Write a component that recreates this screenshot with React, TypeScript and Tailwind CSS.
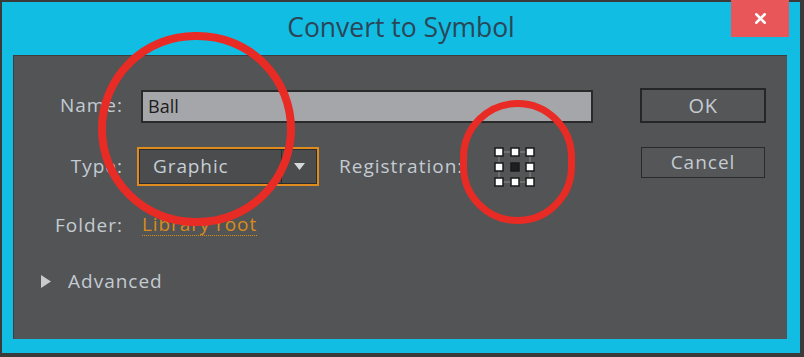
import { X } from 'lucide-react'

const labelCls = 'w-[109px] shrink-0 text-right text-[19px] text-[#c3cbd3] tracking-[1px]'

function RegistrationGrid() {
  const pts = [499, 515, 530]
  const rows = [151, 166, 181]
  return (
    <svg width="44" height="44" viewBox="493 144 44 44" className="shrink-0">
      <rect x={499} y={151} width={31} height={30} fill="none" stroke="#8d8d8d" strokeWidth={1} />
      {rows.map((cy, r) =>
        pts.map((cx, c) => {
          const center = r === 1 && c === 1
          return (
            <rect
              key={`${r}-${c}`}
              x={cx - 4}
              y={cy - 4}
              width={8}
              height={8}
              fill={center ? '#1f1f1f' : '#ffffff'}
              stroke="#1a1a1a"
              strokeWidth={1.5}
            />
          )
        })
      )}
    </svg>
  )
}

export default function App() {
  return (
    <div
      className="relative w-[804px] h-[357px] overflow-hidden bg-[#3a3a3a] pt-[2px] pl-[2px] pr-[4px] pb-[4px]"
      style={{ fontFamily: '"Open Sans", "Noto Sans", sans-serif' }}
    >
      <div className="flex h-full flex-col bg-[#12bde4]">
        {/* Title bar */}
        <div className="grid h-[53px] shrink-0 grid-cols-[1fr_auto_1fr]">
          <div />
          <div className="pt-[6px] text-[26.5px] text-[#2b4657]">Convert to Symbol</div>
          <div className="flex justify-end pr-[11px]">
            <div className="-mt-[2px] flex h-[37px] w-[58px] items-center justify-center bg-[#e8565a]">
              <X className="h-[17px] w-[17px] text-white" strokeWidth={3.5} />
            </div>
          </div>
        </div>

        {/* Body */}
        <div className="ml-[11px] mr-[13px] mb-[14px] flex flex-1 border-l border-t border-[#3e3e3e] bg-[#535455]">
          <div className="flex flex-1 flex-col pt-[32px]">
            <div className="flex h-[35px] items-center">
              <span className={labelCls}>Name:</span>
              <div className="ml-[18px] mt-[2px] flex h-[33px] w-[452px] items-center border-2 border-[#2a2a2a] bg-[#a5a6a9] pl-[5px] text-[18px] text-[#1c1c1c]">
                Ball
              </div>
            </div>

            <div className="mt-[24px] flex h-[39px] items-center">
              <span className={labelCls}>Type:</span>
              <div className="ml-[14px] flex h-[39px] w-[182px] border-2 border-[#df8b1e]">
                <div className="flex flex-1 items-center border border-[#2c2c2c] bg-[#4b4c4d]">
                  <span className="flex-1 pl-[13px] text-[19px] text-[#c6cfd6] tracking-[0.9px]">Graphic</span>
                  <div className="h-full w-px bg-[#2c2c2c]" />
                  <div className="flex w-[34px] items-center justify-center">
                    <svg width="11" height="7" viewBox="0 0 11 7">
                      <path d="M0 0 H11 L5.5 7 Z" fill="#d6d8da" />
                    </svg>
                  </div>
                </div>
              </div>
              <span className="ml-[20px] text-[19px] text-[#c3cbd3] tracking-[1px]">Registration:</span>
              <div className="ml-[30px]">
                <RegistrationGrid />
              </div>
            </div>

            <div className="mt-[27px] flex h-[24px] items-center">
              <span className={labelCls}>Folder:</span>
              <span className="ml-[19px] border-b border-dotted border-[#d98c1a] text-[19px] leading-[21px] text-[#d98c1a] tracking-[0.9px]">
                Library root
              </span>
            </div>

            <div className="mt-[32px] flex h-[24px] items-center pl-[27px]">
              <svg width="10" height="13" viewBox="0 0 10 13">
                <path d="M0 0 L10 6.5 L0 13 Z" fill="#c9cbcd" />
              </svg>
              <span className="ml-[17px] text-[19px] text-[#c3cbd3] tracking-[1px]">Advanced</span>
            </div>
          </div>

          <div className="mr-[21px] flex w-[126px] flex-col pt-[32px]">
            <button className="flex h-[35px] w-[126px] items-center justify-center border-2 border-[#262626] bg-[#555657] text-[20px] text-[#c3cbd3] tracking-[0.5px]">
              OK
            </button>
            <button className="ml-[1px] mt-[24px] flex h-[31px] w-[124px] items-center justify-center border border-[#2a2a2a] bg-[#555657] text-[19px] text-[#c3cbd3] tracking-[1px]">
              Cancel
            </button>
          </div>
        </div>
      </div>

      {/* red annotation circles */}
      <div className="pointer-events-none absolute left-[98px] top-[32px] h-[194px] w-[197px] rounded-full border-[8px] border-[#e92b25]" />
      <div className="pointer-events-none absolute left-[460px] top-[100px] h-[124px] w-[115px] rounded-full border-[7px] border-[#e92b25]" />
    </div>
  )
}
